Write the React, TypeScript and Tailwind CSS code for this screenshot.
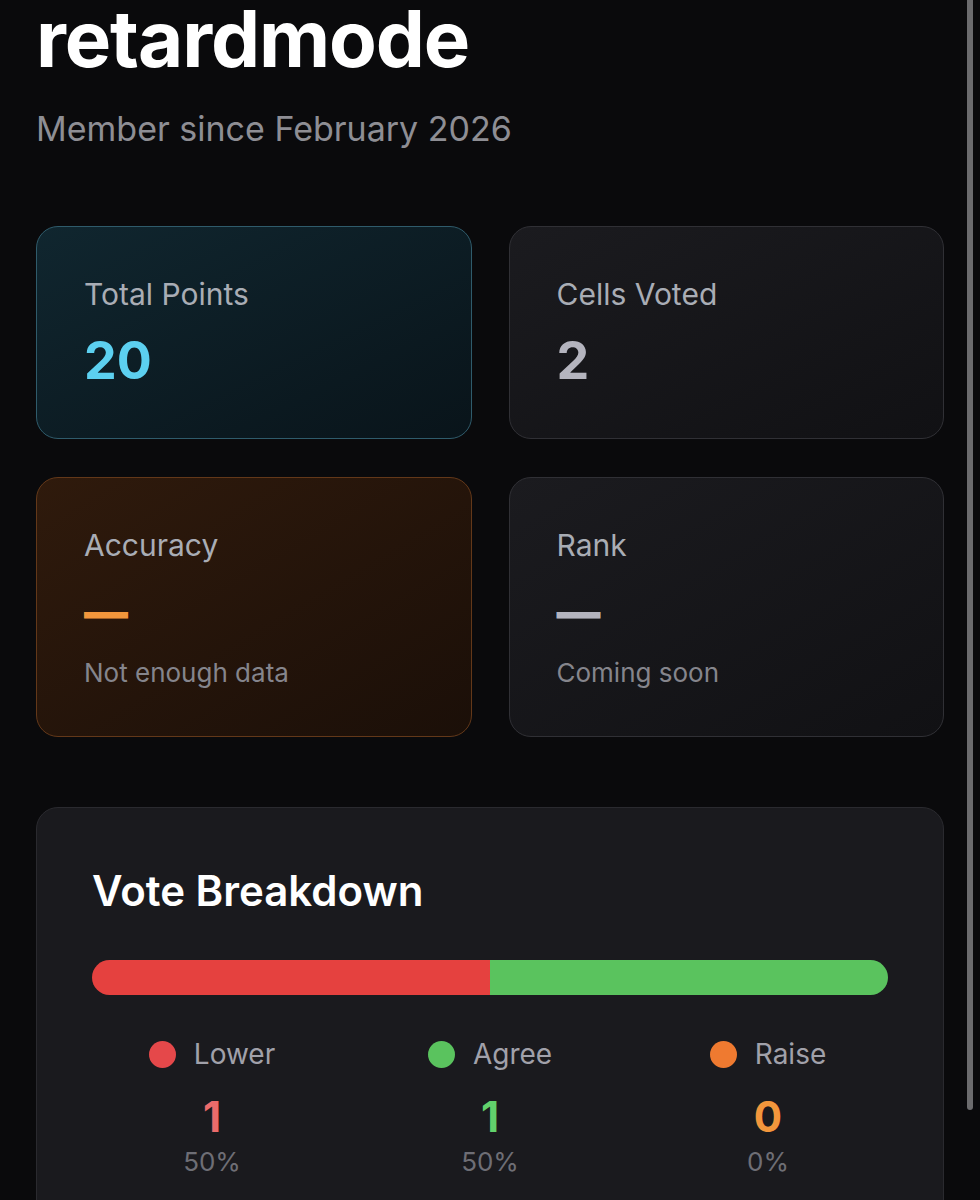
import React from 'react';

type Stat = {
    label: string;
    value: string;
    note?: string;
    card: string;
    valueColor: string;
};

const STATS: Stat[] = [
    {
        label: 'Total Points',
        value: '20',
        card: 'border-[#2f5b6b] bg-linear-to-br from-[#10262f] to-[#09141a]',
        valueColor: 'text-[#5cd0f0]',
    },
    {
        label: 'Cells Voted',
        value: '2',
        card: 'border-[#303035] bg-linear-to-br from-[#1b1b1f] to-[#111114]',
        valueColor: 'text-[#b4b4be]',
    },
    {
        label: 'Accuracy',
        value: '—',
        note: 'Not enough data',
        card: 'border-[#633819] bg-linear-to-br from-[#2f1a0c] to-[#1b0f08]',
        valueColor: 'text-[#f2963c]',
    },
    {
        label: 'Rank',
        value: '—',
        note: 'Coming soon',
        card: 'border-[#303035] bg-linear-to-br from-[#1b1b1f] to-[#111114]',
        valueColor: 'text-[#b4b4be]',
    },
];

const VOTES = [
    { label: 'Lower', count: 1, pct: '50%', dot: 'bg-[#e5484a]', num: 'text-[#ec6b6b]' },
    { label: 'Agree', count: 1, pct: '50%', dot: 'bg-[#5ac35e]', num: 'text-[#62d26c]' },
    { label: 'Raise', count: 0, pct: '0%', dot: 'bg-[#ef7a30]', num: 'text-[#f2963c]' },
];

const StatCard: React.FC<{ stat: Stat }> = ({ stat }) => {
    const isDash = stat.value === '—';
    return (
        <div className={`rounded-[22px] border px-[47px] pt-[48px] pb-[47px] ${stat.card}`}>
            <p className="text-[30px] leading-[38px] text-[#a9adb5]">{stat.label}</p>
            <p
                className={`mt-[18px] leading-[60px] ${isDash ? 'text-[44px] font-black' : 'text-[52px] font-bold'} ${stat.valueColor}`}
            >
                {stat.value}
            </p>
            {stat.note && <p className="mt-[15px] text-[26px] leading-[32px] text-[#85858c]">{stat.note}</p>}
        </div>
    );
};

export default function App() {
    return (
        <div className="relative h-[1200px] overflow-hidden bg-[#0a0a0c] font-['Inter','Noto_Sans',sans-serif] px-[36px]">
            <h1 className="text-[78px] leading-[78px] font-bold text-white tracking-[-1.1px]">retardmode</h1>
            <p className="mt-[30px] text-[34px] leading-[41px] text-[#8e8e94]">Member since February 2026</p>

            <div className="mt-[77px] grid grid-cols-2 gap-x-[37px] gap-y-[38px]">
                {STATS.map((s) => (
                    <StatCard key={s.label} stat={s} />
                ))}
            </div>

            <div className="mt-[70px] rounded-[22px] border border-[#2a2a2f] bg-[#1a1a1e] px-[55px] pt-[59px] pb-[56px]">
                <h2 className="text-[42px] leading-[48px] font-semibold text-white">Vote Breakdown</h2>

                <div className="mt-[45px] flex h-[35px] overflow-hidden rounded-full">
                    <div className="h-full w-1/2 bg-[#e5413f]" />
                    <div className="h-full w-1/2 bg-[#5ac35e]" />
                </div>

                <div className="mt-[42px] grid grid-cols-3 gap-x-[38px]">
                    {VOTES.map((v) => (
                        <div key={v.label} className="flex flex-col items-center">
                            <div className="flex items-center gap-[18px]">
                                <span className={`h-[27px] w-[27px] rounded-full ${v.dot}`} />
                                <span className="text-[28px] leading-[34px] text-[#a1a1aa]">{v.label}</span>
                            </div>
                            <p className={`mt-[22px] text-[42px] leading-[48px] font-bold ${v.num}`}>{v.count}</p>
                            <p className="mt-[5px] text-[26px] leading-[32px] text-[#6e6e75]">{v.pct}</p>
                        </div>
                    ))}
                </div>
            </div>

            {/* scroll indicator */}
            <div className="absolute right-[7px] top-0 h-[1110px] w-[6px] rounded-b-full bg-[#6c6c6e]" />
        </div>
    );
}
